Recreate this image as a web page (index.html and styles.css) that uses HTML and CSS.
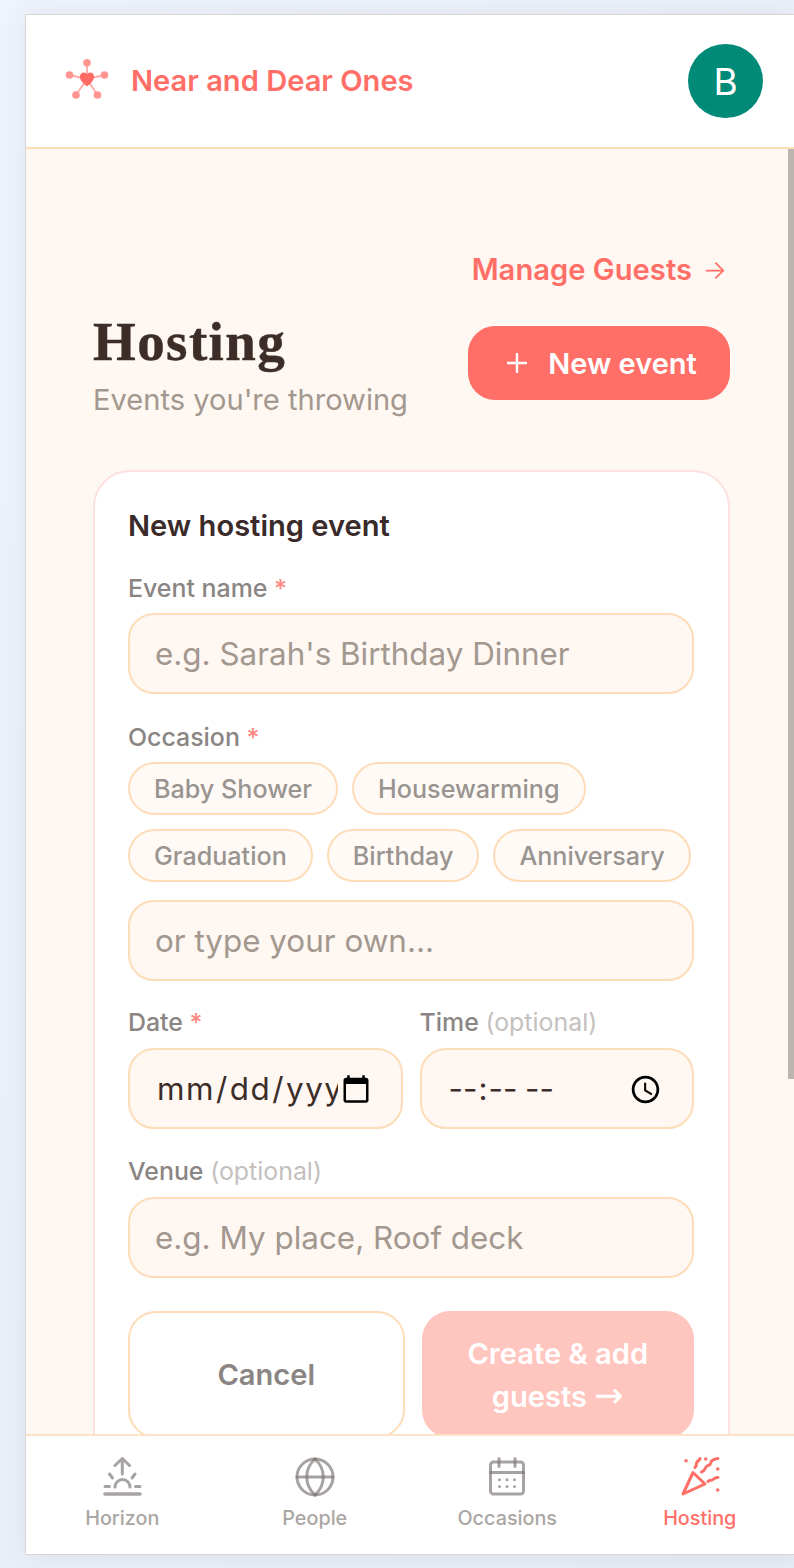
FILE: index.html
```html
<!DOCTYPE html>
<html lang="en">
<head>
<meta charset="utf-8">
<title>Hosting</title>
<link rel="stylesheet" href="styles.css">
</head>
<body>
<div class="app">
  <header class="topbar">
    <div class="brand">
      <svg class="logo" viewBox="0 0 44 44" aria-hidden="true">
        <g stroke="#ffaaa6" stroke-width="1.800" fill="none">
          <path d="M22 20V4M22 20 4.500 16M22 20 39.500 16M22 20 11 36M22 20 32.500 36"/>
        </g>
        <g fill="#ff9491">
          <circle cx="22" cy="3.800" r="3.800"/>
          <circle cx="4.500" cy="16" r="3.800"/>
          <circle cx="39.500" cy="16" r="3.800"/>
          <circle cx="11" cy="36" r="3.800"/>
          <circle cx="32.500" cy="36" r="3.800"/>
        </g>
        <path fill="#ff6b63" d="M22 27.500C17 23.500 15 21 15 17.500c0-2.500 1.800-4 3.800-4 1.300 0 2.500.7 3.200 1.900.7-1.200 1.900-1.900 3.200-1.900 2 0 3.800 1.500 3.800 4 0 3.500-2 6-7 10Z"/>
      </svg>
      <span class="brand-name">Near and Dear Ones</span>
    </div>
    <div class="avatar">B</div>
  </header>

  <main class="content">
    <div class="scrollbar"></div>
    <div class="manage-row">
      <a class="manage-link">Manage Guests
        <svg class="manage-arrow" viewBox="0 0 24 24" aria-hidden="true"><path d="M2 12h20M13 3l9 9-9 9"/></svg>
      </a>
    </div>
    <div class="title-row">
      <div>
        <h1 class="title">Hosting</h1>
        <p class="subtitle">Events you're throwing</p>
      </div>
      <button class="new-btn">
        <svg class="plus" viewBox="0 0 24 24" aria-hidden="true"><path d="M12 2v20M2 12h20"/></svg>
        New event
      </button>
    </div>

    <section class="card">
      <h2 class="card-title">New hosting event</h2>

      <label class="label first-label">Event name <span class="req">*</span></label>
      <input class="field" placeholder="e.g. Sarah's Birthday Dinner">

      <label class="label occasion-label">Occasion <span class="req">*</span></label>
      <div class="chips">
        <span class="chip">Baby Shower</span>
        <span class="chip">Housewarming</span>
        <span class="chip">Graduation</span>
        <span class="chip">Birthday</span>
        <span class="chip">Anniversary</span>
      </div>
      <input class="field" placeholder="or type your own...">

      <div class="two-col">
        <div class="col">
          <label class="label">Date <span class="req">*</span></label>
          <input class="field native" type="date">
        </div>
        <div class="col">
          <label class="label">Time <span class="opt">(optional)</span></label>
          <input class="field native" type="time">
        </div>
      </div>

      <label class="label venue-label">Venue <span class="opt">(optional)</span></label>
      <input class="field" placeholder="e.g. My place, Roof deck">

      <div class="actions">
        <button class="btn-cancel">Cancel</button>
        <button class="btn-create">Create &amp; add guests <span class="long-arrow">→</span></button>
      </div>
    </section>
  </main>

  <nav class="tabs">
    <a class="tab">
      <svg class="tab-icon" viewBox="0 0 40 40" aria-hidden="true">
        <path d="M20.300 17V1.500M13 8.500 20.300 1.500 27.500 8.500"/>
        <path d="M13 30a7.500 7.500 0 0 1 15 0"/>
        <path d="M7.500 17 10.500 21M33 17 30 21"/>
        <path d="M3 29.500h4.500M33.500 29.500h4.500"/>
        <path d="M3 37h35" class="thick"/>
      </svg>
      <span>Horizon</span>
    </a>
    <a class="tab">
      <svg class="tab-icon" viewBox="0 0 40 40" aria-hidden="true">
        <circle cx="20" cy="20" r="18"/>
        <path d="M2 20h36"/>
        <path d="M20 2c-11 10-11 26 0 36"/>
        <path d="M20 2c11 10 11 26 0 36"/>
      </svg>
      <span>People</span>
    </a>
    <a class="tab">
      <svg class="tab-icon" viewBox="0 0 40 40" aria-hidden="true">
        <rect x="3.500" y="5" width="33" height="32" rx="3"/>
        <path d="M3.500 15.500h33M12 1.500v8M28 1.500v8"/>
        <g class="dots">
          <circle cx="12.500" cy="22.700" r="1.500"/><circle cx="20" cy="22.700" r="1.500"/><circle cx="27.500" cy="22.700" r="1.500"/>
          <circle cx="12.500" cy="29.500" r="1.500"/><circle cx="20" cy="29.500" r="1.500"/><circle cx="27.500" cy="29.500" r="1.500"/>
        </g>
      </svg>
      <span>Occasions</span>
    </a>
    <a class="tab active">
      <svg class="tab-icon" viewBox="0 0 40 40" aria-hidden="true">
        <path d="M3 37 13 15.500 25 27Z"/>
        <path d="M15 10.500c2.500-2 .5-3.500 2-5.500s2.500-1 3-3.500"/>
        <path d="M21.500 15c3.500-1 3-3.500 5-5.500s3.500-.5 4-3 3-4.500 7.500-5"/>
        <path d="M28 24.500c2-2 3.500-.5 5-2s3-2.500 5-2"/>
        <path d="M6 3.800h.1M25.700 2h.1M37.700 12h.1M37.700 33h.1" class="round"/>
      </svg>
      <span>Hosting</span>
    </a>
  </nav>
</div>
</body>
</html>
```

FILE: styles.css
```css
* { box-sizing: border-box; }

html, body {
  margin: 0;
  height: 100%;
  overflow: hidden;
}

body {
  background: linear-gradient(120deg, #eff3fb, #e6ebf4);
  font-family: Inter, "Liberation Sans", sans-serif;
  padding: 14px 0 13px 25px;
}

.app {
  height: 100%;
  display: flex;
  flex-direction: column;
  border-top: 1px solid #d6d6d6;
  border-left: 1px solid #d6d6d6;
  border-bottom: 1px solid #d6d6d6;
  background: #fff;
  box-shadow: 0 0 24px rgba(90, 110, 150, .10);
}

.topbar {
  flex: none;
  height: 134px;
  display: flex;
  align-items: center;
  justify-content: space-between;
  padding: 0 31px 0 39px;
  background: #fff;
  border-bottom: 2px solid #fddcb8;
}

.brand {
  display: flex;
  align-items: center;
  gap: 22px;
}

.logo {
  width: 44px;
  height: 44px;
}

.brand-name {
  font-size: 29.100px;
  font-weight: 600;
  color: #ff6f67;
  margin-top: -2px;
}

.avatar {
  width: 75px;
  height: 74.500px;
  border-radius: 50%;
  background: #028a78;
  color: #fff;
  font-size: 37px;
  font-weight: 400;
  display: flex;
  align-items: center;
  justify-content: center;
}

.content {
  position: relative;
  flex: 1;
  min-height: 0;
  overflow: hidden;
  background: #fff7f1;
  padding: 102px 64px 0 67px;
}

.scrollbar {
  position: absolute;
  top: 0;
  right: 0;
  width: 6px;
  height: 930px;
  background: #bab5b1;
}

.manage-row {
  display: flex;
  justify-content: flex-end;
  margin-bottom: 22px;
}

.manage-link {
  display: flex;
  align-items: center;
  gap: 12px;
  font-size: 29.200px;
  font-weight: 600;
  color: #ff6f67;
  margin-right: 5px;
  line-height: 38px;
}

.manage-arrow {
  width: 21px;
  height: 21px;
  fill: none;
  stroke: #ff6f67;
  stroke-width: 2;
}

.title-row {
  display: flex;
  justify-content: space-between;
  align-items: center;
  margin-bottom: 50px;
}

.title {
  margin: 0;
  font-family: "Liberation Serif", serif;
  font-size: 55px;
  font-weight: 700;
  line-height: 62px;
  letter-spacing: 1.400px;
  -webkit-text-stroke: 0.4px #3c2d29;
  color: #3c2d29;
}

.subtitle {
  margin: 7px 0 0;
  font-size: 29.100px;
  line-height: 40px;
  color: #a2988f;
}

.new-btn {
  display: flex;
  align-items: center;
  justify-content: center;
  gap: 19px;
  width: 262px;
  height: 74px;
  margin-bottom: 5px;
  padding: 0 0 0 4px;
  border: 0;
  border-radius: 27px;
  background: #ff6f67;
  color: #fff;
  font: 600 29px Inter, sans-serif;
}

.plus {
  width: 24px;
  height: 24px;
  fill: none;
  stroke: #fff;
  stroke-width: 2.400;
}

.card {
  background: #fff;
  border: 2px solid #fde1de;
  border-radius: 37px;
  padding: 34px 34px 80px 33px;
}

.card-title {
  margin: 0 0 25px;
  font-size: 29.100px;
  line-height: 40px;
  font-weight: 600;
  color: #3a2a2a;
}

.label {
  display: block;
  font-size: 24.900px;
  line-height: 34px;
  font-weight: 500;
  color: #8a8583;
  margin-bottom: 9px;
}

.first-label { margin-bottom: 8px; }

.req { color: #ff8a84; }

.opt {
  font-weight: 400;
  color: #c4c0be;
}

.field {
  display: block;
  width: 100%;
  height: 80.500px;
  padding: 2px 25px 0;
  border: 2px solid #fddcb8;
  border-radius: 26px;
  background: #fff7f1;
  font: 400 31.400px Inter, sans-serif;
  color: #3c2d29;
  outline: none;
}

.field::placeholder { color: #a2988f; opacity: 1; }

.occasion-label { margin-top: 26.500px; margin-bottom: 8px; }

.chips {
  display: flex;
  flex-wrap: wrap;
  gap: 13.500px 14px;
  margin-bottom: 18.500px;
}

.chip {
  height: 53px;
  padding: 0 24px;
  border: 2px solid #fddcb8;
  border-radius: 27px;
  background: #fffaf5;
  color: #999490;
  font-size: 25.150px;
  font-weight: 500;
  line-height: 50px;
}

.two-col {
  display: grid;
  grid-template-columns: 1fr 1fr;
  gap: 17px;
  margin-top: 24.500px;
}

.col { min-width: 0; }

.venue-label { margin-top: 25.500px; }

.native {
  padding: 2px 27px 0 26px;
  letter-spacing: 1.500px;
}

.actions {
  display: grid;
  grid-template-columns: 276fr 272fr;
  gap: 17px;
  margin-top: 33.500px;
}

.btn-cancel, .btn-create {
  height: 127px;
  border-radius: 28px;
  font: 600 29.100px/43px Inter, sans-serif;
}

.btn-cancel {
  background: #fff;
  border: 2px solid #fddcb8;
  color: #8a8583;
}

.btn-create {
  background: #ffc5bf;
  border: 0;
  color: #fff;
  padding: 0 30px;
}

.long-arrow {
  font-family: "DejaVu Sans", sans-serif;
  font-size: 35px;
  font-weight: 400;
  line-height: 1;
}

.tabs {
  flex: none;
  height: 120px;
  display: grid;
  grid-template-columns: repeat(4, 192.500px);
  background: #fff;
  border-top: 2px solid #fbe3c9;
}

.tab {
  display: flex;
  flex-direction: column;
  align-items: center;
  padding-top: 21px;
  gap: 8px;
  font-size: 19.800px;
  line-height: 26px;
  font-weight: 500;
  color: #aaa6a4;
}

.tab-icon {
  width: 40px;
  height: 40px;
  fill: none;
  stroke: rgba(125, 120, 118, .68);
  stroke-width: 3;
  stroke-linecap: round;
  stroke-linejoin: round;
}

.tab-icon .thick { stroke-width: 3.600; }

.tab-icon .dots circle { fill: rgba(125, 120, 118, .68); stroke: none; }

.tab.active { color: #ff6f67; }

.tab.active .tab-icon { stroke: #ff6f67; }

.tab .round { stroke-width: 3.400; }
```
